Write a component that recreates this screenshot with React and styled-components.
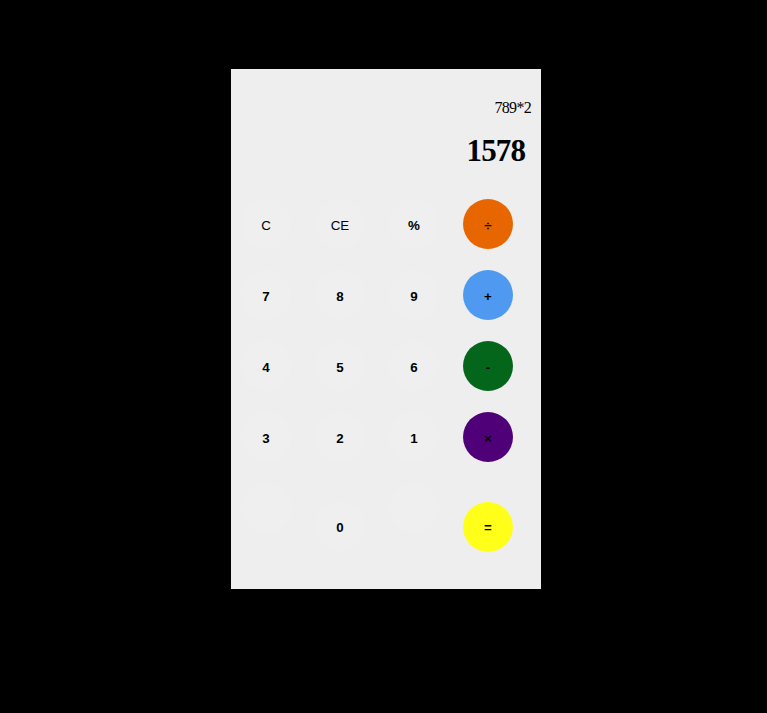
import React from "react"
import styled, { createGlobalStyle } from "styled-components"

const GlobalStyle = createGlobalStyle`
  html, body {
    margin: 0;
    background: #000;
  }
`

const Page = styled.div`
  min-height: 713px;
  padding: 69px 0 0 231px;
  box-sizing: border-box;
`

const Calculator = styled.div`
  width: 310px;
  height: 520px;
  background: #eeeeee;
  display: flex;
  flex-direction: column;
`

const Screen = styled.div`
  display: flex;
  flex-direction: column;
  align-items: flex-end;
  padding-top: 29px;
  font-family: "Liberation Serif", "Times New Roman", serif;
  color: #000;
`

const Expression = styled.div`
  font-size: 16px;
  line-height: 20px;
  letter-spacing: -0.7px;
  padding-right: 10px;
`

const Result = styled.div`
  margin-top: 13px;
  font-size: 31px;
  font-weight: bold;
  line-height: 40px;
  letter-spacing: -0.9px;
  padding-right: 16px;
`

const Keypad = styled.div`
  margin-top: 28px;
  padding-left: 10px;
  display: flex;
  flex-direction: column;
  gap: 21px;
`

const Row = styled.div`
  display: flex;
  align-items: flex-start;
  gap: 24px;
`

const Key = styled.button`
  width: 50px;
  height: 50px;
  margin-top: ${(p) => (p.$drop ? "19px" : "0")};
  padding: ${(p) => (p.$drop ? "2px" : "4px")} 0 0;
  border: none;
  border-radius: 50%;
  background: ${(p) => p.$color || "#efefef"};
  color: #000;
  font-family: "Liberation Sans", Arial, sans-serif;
  font-size: 13.33px;
  font-weight: ${(p) => (p.$bold ? "bold" : "normal")};
  line-height: ${(p) => (p.$drop ? "48px" : "46px")};
  text-align: center;
  cursor: pointer;
`

const rows = [
  [
    { label: "C" },
    { label: "CE" },
    { label: "%", bold: true },
    { label: "÷", bold: true, color: "#e76600" },
  ],
  [
    { label: "7", bold: true },
    { label: "8", bold: true },
    { label: "9", bold: true },
    { label: "+", bold: true, color: "#4f9af0" },
  ],
  [
    { label: "4", bold: true },
    { label: "5", bold: true },
    { label: "6", bold: true },
    { label: "-", bold: true, color: "#03661a" },
  ],
  [
    { label: "3", bold: true },
    { label: "2", bold: true },
    { label: "1", bold: true },
    { label: "×", bold: true, color: "#4f0078" },
  ],
  [
    { label: "" },
    { label: "0", bold: true, drop: true },
    { label: "" },
    { label: "=", bold: true, drop: true, color: "#ffff1a" },
  ],
]

export default function App() {
  return (
    <>
      <GlobalStyle />
      <Page>
        <Calculator>
          <Screen>
            <Expression>789*2</Expression>
            <Result>1578</Result>
          </Screen>
          <Keypad>
            {rows.map((row, i) => (
              <Row key={i}>
                {row.map((k, j) => (
                  <Key key={j} $bold={k.bold} $drop={k.drop} $color={k.color}>
                    {k.label}
                  </Key>
                ))}
              </Row>
            ))}
          </Keypad>
        </Calculator>
      </Page>
    </>
  )
}
